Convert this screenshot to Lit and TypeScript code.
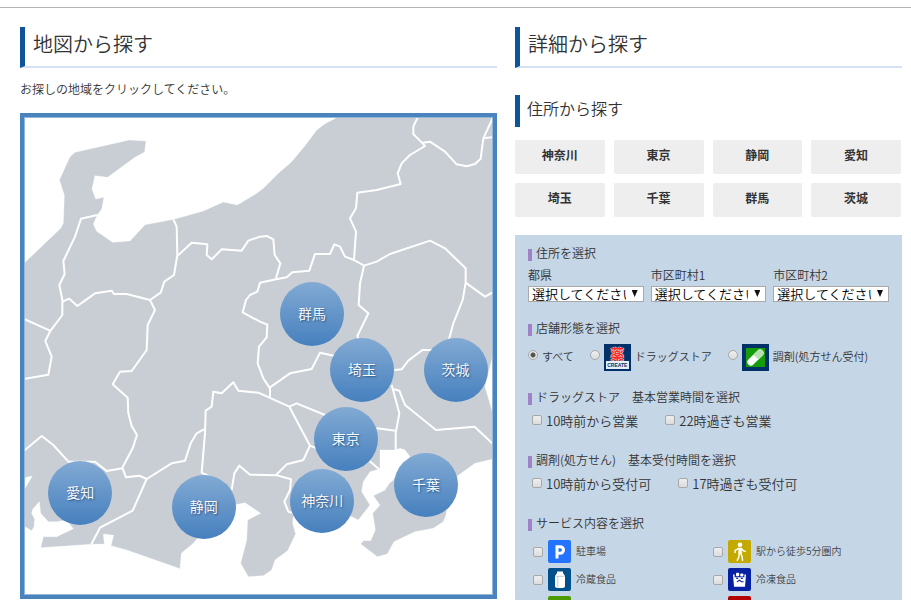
import { LitElement, html, svg, css } from "lit";
import { customElement } from "lit/decorators.js";
import { styleMap } from "lit/directives/style-map.js";

// The map is drawn in its own units: this is the frame's origin and extent.
const MAP = { x: 75, y: 354, w: 1401, h: 1428 };

const PINS: [string, number, number][] = [
  ["群馬", 935, 944],
  ["埼玉", 1085, 1111],
  ["茨城", 1364, 1111],
  ["東京", 1036, 1316],
  ["神奈川", 966, 1501],
  ["千葉", 1276, 1453],
  ["愛知", 243, 1477],
  ["静岡", 612, 1518],
];

const SEA = [
  "75,350 1015,350 1008,354 975,371 950,390 915,437 875,485 835,520 790,565 770,580 712,615 695,611 670,606 610,633 565,646 520,658 490,664 435,674 390,723 338,727 290,694 280,672 292,645 305,628 312,592 287,597 276,567 285,527 323,532 405,472 434,456 438,423 388,420 225,457 210,470 178,540 193,585 190,670 182,685 75,787",
  "75,1580 95,1592 102,1580 104,1558 95,1540 98,1528 118,1505 122,1540 145,1565 170,1565 200,1560 220,1586 170,1610 130,1610 122,1643 274,1633 313,1632 310,1602 341,1606 333,1637 380,1650 540,1706 544,1660 580,1630 595,1612 640,1560 700,1516 735,1508 782,1540 743,1560 740,1620 722,1690 745,1730 790,1727 815,1710 825,1680 863,1652 887,1602 878,1570 880,1550 1055,1550 1075,1560 1110,1515 1085,1475 1090,1445 1110,1415 1140,1407 1140,1350 1185,1350 1200,1345 1215,1350 1230,1370 1180,1440 1168,1450 1155,1470 1120,1487 1140,1515 1118,1540 1126,1590 1112,1622 1090,1622 1082,1632 1132,1670 1162,1662 1182,1625 1245,1595 1300,1585 1330,1565 1338,1545 1345,1500 1372,1428 1425,1390 1480,1377 1480,1790 75,1790",
  "70,1434 97,1428 75,1465",
  "1480,1060 1455,1160 1480,1245",
];

const BORDERS = [
  "292,645 243,656 225,710 190,783 194,822 178,855 187,900 187,945 150,994 136,1023 155,1070 145,1124 70,1137",
  "70,956 150,992",
  "187,905 208,896 232,918 260,898 285,880 335,872 342,882 380,882 450,900",
  "520,658 530,680 532,765 522,825 493,845 482,878 450,900 465,930 443,975 440,1050 395,1113 360,1115 338,1153 383,1193 385,1240 395,1278 411,1305 398,1345 367,1403 378,1432 418,1427 440,1437 398,1532 300,1583 274,1633",
  "532,768 575,728 622,733 620,765 635,778 665,748 725,752 745,722 780,710 800,708 820,718 824,765 841,790 828,835",
  "1347,1018 1360,970 1388,900 1397,848 1397,805 1335,745 1290,722 1170,762 1130,785 1092,797 1062,780 1035,770 1020,740 1003,733 990,762 945,762 928,812 877,817 860,832 828,838 780,848 772,875 750,885 738,900 728,937 780,965 802,974 800,1012 777,1040 773,1090 790,1135 810,1165 810,1190",
  "1397,848 1455,890 1480,876",
  "1092,797 1080,850 1076,915 1105,940 1072,1008 1080,1030",
  "1062,780 1068,695 1050,655 1068,625 1072,578 1130,570 1202,552 1193,520 1205,490 1230,465 1275,438 1265,427 1240,402 1240,380 1254,350",
  "1268,428 1290,425 1335,455 1370,493 1400,499 1425,492 1442,476 1450,415 1480,350",
  "1450,415 1480,411",
  "440,1437 515,1390 555,1382 572,1330 590,1300 612,1288",
  "630,1430 605,1418 615,1300 617,1232 635,1220 640,1175 665,1180 700,1147 715,1172 775,1178 868,1220 930,1337 910,1380 860,1393 828,1425",
  "695,1470 703,1420 718,1397 750,1424 830,1426 873,1438 870,1470 853,1505 865,1535 882,1540",
  "868,1220 890,1210 975,1245",
  "930,1337 950,1345",
  "810,1162 870,1120 935,1107 960,1058 1005,1068",
  "70,1354 125,1308 160,1335 205,1385 285,1385 320,1413 367,1405",
  "1175,1155 1198,1240 1187,1300 1187,1350",
  "1130,1285 1187,1292",
  "1108,1383 1140,1410",
  "1182,1168 1198,1172 1215,1215 1308,1290 1424,1280 1480,1333",
  "1183,1110 1205,1108 1225,1082 1267,1050 1297,1050",
];

const PREFECTURES = ["神奈川", "東京", "静岡", "愛知", "埼玉", "千葉", "群馬", "茨城"];

const drugIcon = html`<span class="shop drug"><b>薬</b><i>CREATE</i></span>`;

const pillIcon = html`<svg class="shop" viewBox="0 0 27 27" aria-hidden="true">
  <rect width="27" height="27" fill="#003168" />
  <rect x="4" y="4" width="19" height="19" fill="#149c0a" />
  <g transform="rotate(-45 13.5 13.5)">
    <rect x="3.5" y="10" width="20" height="7" rx="3.5" fill="#fff" />
    <path d="M14 10h6a3.5 3.5 0 0 1 0 7h-6z" fill="#b5e0b0" />
  </g>
</svg>`;

const parking = svg`<rect width="23" height="23" rx="2" fill="#2373ff"/>
  <path d="M9 18.5V6.7h3.2a3.3 3.3 0 0 1 0 6.6H9" fill="none" stroke="#fff" stroke-width="3"/>`;
const walking = svg`<rect width="23" height="23" rx="2" fill="#c4aa00"/>
  <circle cx="12" cy="4.8" r="2.3" fill="#fff"/>
  <path d="M10.4 8h3l.6 6h-3.6z" fill="#fff"/>
  <path d="M11 8.2 7.2 10.3 7 12.5M13 8.4l2.4 2.4 1.8.6M11.4 13.5l-.6 3.5-1.6 3.3M12.8 13.5l1.4 3.2.3 3.8" fill="none" stroke="#fff" stroke-width="1.5" stroke-linecap="round" stroke-linejoin="round"/>`;
const milk = svg`<rect width="23" height="23" rx="2" fill="#00508c"/>
  <path d="M9 3.5h6v1.6l2 3v11l-2 .8H9l-2-.8v-11l2-3z" fill="#fff"/>
  <path d="M9.8 8.5v11M7.2 8.3h9.6" stroke="#9fbdd4" stroke-width=".7" fill="none"/>`;
const frozen = svg`<rect width="23" height="23" rx="2" fill="#0520a0"/>
  <path d="M5 6.5h1.6v2.8h9.8V6.5H18l-1 12.2H6z" fill="#fff"/>
  <rect x="8" y="4.8" width="3.2" height="3.4" rx="1" fill="#fff"/>
  <rect x="12.2" y="5.4" width="3.2" height="3.2" rx="1" fill="#fff"/>
  <path d="M8.2 10.4h2M12.8 10.4h2M9 13.9l2.4-1.7 2.2 1.5h2" stroke="#0520a0" stroke-width="1.1" fill="none"/>`;
const green = svg`<rect width="23" height="23" rx="2" fill="#4c9b00"/>`;
const red = svg`<rect width="23" height="23" rx="2" fill="#b40000"/>`;

const tile = (art: unknown) =>
  html`<svg class="tile" viewBox="0 0 23 23" aria-hidden="true">${art}</svg>`;

@customElement("area-map")
class AreaMap extends LitElement {
  static styles = css`
    :host {
      display: block;
      position: relative;
      border: 4px solid #4a84be;
      box-shadow: inset 0 0 0 1px #94b8da;
      padding: 1px;
      font-family: "Noto Sans CJK JP", sans-serif;
    }
    .land {
      display: block;
      width: 100%;
      background: #c9ced5;
    }
    .sea {
      fill: #fff;
      stroke: #fff;
      stroke-width: 1;
      stroke-linejoin: round;
    }
    .line {
      fill: none;
      stroke: #fff;
      stroke-width: 6;
      stroke-linejoin: round;
    }
    .pin {
      position: absolute;
      transform: translate(-50%, -50%);
      width: 64px;
      height: 64px;
      border-radius: 50%;
      background: linear-gradient(#82aad4, #4680be);
      color: #fff;
      font-size: 14px;
      line-height: 62px;
      text-align: center;
      text-decoration: none;
      text-shadow: 1px 1px 2px #2b4f7a;
    }
  `;

  render() {
    return html`
      <svg class="land" viewBox="${MAP.x} ${MAP.y} ${MAP.w} ${MAP.h}" aria-hidden="true">
        ${BORDERS.map((p) => svg`<polyline class="line" points=${p} />`)}
        ${SEA.map((p) => svg`<polygon class="sea" points=${p} />`)}
      </svg>
      ${PINS.map(
        ([name, x, y]) => html`<a
          class="pin"
          href="#"
          style=${styleMap({
            left: `${((x - MAP.x) / MAP.w) * 100}%`,
            top: `${((y - MAP.y) / MAP.h) * 100}%`,
          })}
          >${name}</a
        >`
      )}
    `;
  }
}

@customElement("app-root")
class AppRoot extends LitElement {
  static styles = css`
    :host {
      display: block;
      box-sizing: border-box;
      height: 100vh;
      overflow: hidden;
      padding-top: 7px;
      background: #fff;
      color: #333;
      font-family: "Noto Sans CJK JP", sans-serif;
      font-size: 12px;
      font-weight: 350;
      line-height: 20px;
    }
    * {
      box-sizing: border-box;
    }
    h2,
    h3,
    h4,
    p {
      margin: 0;
      font-weight: 350;
    }
    .page {
      border-top: 1px solid #b3b3b3;
      padding: 19px 9px 0 20px;
      display: grid;
      grid-template-columns: 477fr 387fr;
      gap: 18px;
      align-items: start;
    }
    h2 {
      border-left: 5px solid #0f549b;
      border-bottom: 2px solid #d6e2f2;
      padding: 0 0 5px 8px;
      font-size: 20px;
      line-height: 34px;
    }
    .lead {
      padding: 11px 0 14px;
    }
    h3 {
      margin: 27px 0 13px;
      border-left: 5px solid #0f549b;
      padding: 0 0 6px 7px;
      font-size: 16px;
      line-height: 26px;
    }
    .areas {
      display: grid;
      grid-template-columns: repeat(4, 1fr);
      gap: 9px;
      padding-right: 1px;
    }
    .area {
      height: 34px;
      border: 0;
      border-radius: 2px;
      padding: 0 0 4px;
      background: #eee;
      color: #333;
      font: bold 12px/20px "Noto Sans CJK JP", sans-serif;
    }
    .panel {
      margin-top: 18px;
      padding: 8px 13px 16px;
      background: #c5d6e6;
    }
    h4 {
      display: flex;
      align-items: center;
      gap: 4px;
      font-size: 12px;
    }
    h4::before {
      content: "";
      width: 4px;
      height: 12px;
      margin-top: 4px;
      background: #9f82c6;
    }
    section + section {
      margin-top: 16px;
    }
    section.wide {
      margin-top: 19px;
    }
    .selects {
      display: grid;
      grid-template-columns: repeat(3, 1fr);
      gap: 7px;
      margin-top: 2px;
    }
    .field {
      display: grid;
      gap: 1px;
      position: relative;
      min-width: 0;
    }
    .field::after {
      content: "";
      position: absolute;
      right: 6px;
      bottom: 5px;
      width: 6px;
      height: 7px;
      background: #111;
      clip-path: polygon(0 0, 100% 0, 50% 100%);
    }
    select {
      appearance: none;
      width: 100%;
      height: 16px;
      border: 1px solid #a9a9a9;
      border-radius: 0;
      padding: 0 17px 0 3px;
      background: #fff;
      color: #000;
      font: 350 13px/14px "Noto Sans CJK JP", sans-serif;
    }
    label {
      display: flex;
      align-items: center;
    }
    input {
      appearance: none;
      flex: none;
      width: 10px;
      height: 10px;
      margin: 0 0 2px;
      border: 1px solid #a8a8a8;
      background: linear-gradient(#eee, #dcdcdc);
    }
    input[type="checkbox"] {
      border-radius: 2px;
    }
    input[type="radio"] {
      margin-bottom: 6px;
      border-radius: 50%;
    }
    input[type="radio"]:checked {
      background: radial-gradient(circle, #555 0 2px, #e6e6e6 3px);
    }
    .shops {
      display: flex;
      gap: 16px;
      margin-top: 6px;
      font-size: 11px;
      white-space: nowrap;
    }
    .shops label {
      gap: 4px;
    }
    .name {
      padding-bottom: 4px;
    }
    .shop {
      width: 27px;
      height: 27px;
    }
    .drug {
      display: grid;
      grid-template-rows: 16px 8px;
      padding: 1px 2px 2px;
      background: #003168;
      text-align: center;
    }
    .drug b {
      font-size: 14px;
      line-height: 16px;
      color: #ff2a2a;
      text-shadow: 0 0 1px #fff, 0 0 1px #fff, 0 0 1px #fff;
    }
    .drug i {
      display: grid;
      justify-content: center;
      background: #e6eef6;
      color: #003168;
      font: bold 5px/8px "Liberation Sans", sans-serif;
    }
    .hours {
      display: flex;
      gap: 27px;
      margin-top: 4px;
      padding-left: 4px;
      font-size: 13px;
    }
    .hours label {
      gap: 4px;
    }
    .services {
      display: grid;
      grid-template-columns: 180fr 176fr;
      gap: 5px 0;
      margin-top: 7px;
      padding-left: 5px;
      font-size: 10px;
    }
    .services label {
      gap: 5px;
      color: #444;
    }
    .services .name {
      padding-bottom: 2px;
    }
    .services input {
      margin: 0;
    }
    .tile {
      display: block;
      width: 23px;
      height: 23px;
    }
    .more {
      padding-left: 15px;
    }
  `;

  private service(name: string, art: unknown) {
    return html`<label
      ><input type="checkbox" />${tile(art)}<span class="name">${name}</span></label
    >`;
  }

  render() {
    return html`
      <main class="page">
        <div>
          <h2>地図から探す</h2>
          <p class="lead">お探しの地域をクリックしてください。</p>
          <area-map></area-map>
        </div>
        <div>
          <h2>詳細から探す</h2>
          <h3>住所から探す</h3>
          <div class="areas">
            ${PREFECTURES.map((p) => html`<button class="area" type="button">${p}</button>`)}
          </div>
          <form class="panel">
            <section>
              <h4>住所を選択</h4>
              <div class="selects">
                ${["都県", "市区町村1", "市区町村2"].map(
                  (n) => html`<label class="field"
                    >${n}<select>
                      <option>選択してください</option>
                    </select></label
                  >`
                )}
              </div>
            </section>
            <section>
              <h4>店舗形態を選択</h4>
              <div class="shops">
                <label
                  ><input type="radio" name="shop" checked /><span class="name">すべて</span></label
                >
                <label
                  ><input type="radio" name="shop" />${drugIcon}<span class="name"
                    >ドラッグストア</span
                  ></label
                >
                <label
                  ><input type="radio" name="shop" />${pillIcon}<span class="name"
                    >調剤(処方せん受付)</span
                  ></label
                >
              </div>
            </section>
            <section>
              <h4>ドラッグストア　基本営業時間を選択</h4>
              <div class="hours">
                <label><input type="checkbox" />10時前から営業</label>
                <label><input type="checkbox" />22時過ぎも営業</label>
              </div>
            </section>
            <section class="wide">
              <h4>調剤(処方せん)　基本受付時間を選択</h4>
              <div class="hours">
                <label><input type="checkbox" />10時前から受付可</label>
                <label><input type="checkbox" />17時過ぎも受付可</label>
              </div>
            </section>
            <section class="wide">
              <h4>サービス内容を選択</h4>
              <div class="services">
                ${this.service("駐車場", parking)} ${this.service("駅から徒歩5分圏内", walking)}
                ${this.service("冷蔵食品", milk)} ${this.service("冷凍食品", frozen)}
                <span class="more">${tile(green)}</span>
                <span class="more">${tile(red)}</span>
              </div>
            </section>
          </form>
        </div>
      </main>
    `;
  }
}
